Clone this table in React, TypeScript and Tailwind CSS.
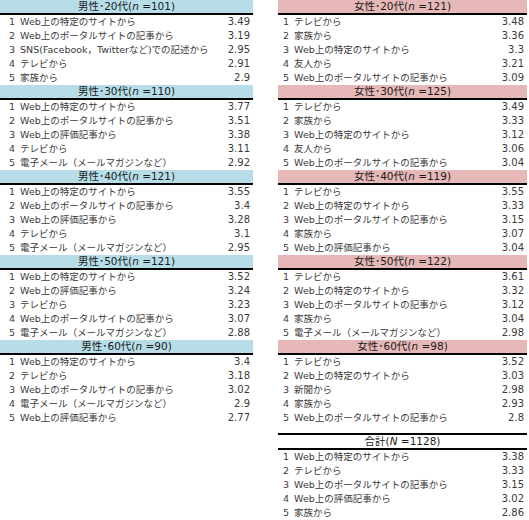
import React from 'react';

type Row = [string, string];
type Block = { title: string; n: string; big?: boolean; rows: Row[] };

const SITE = 'Web上の特定のサイトから';
const PORTAL = 'Web上のポータルサイトの記事から';
const REVIEW = 'Web上の評価記事から';
const TV = 'テレビから';
const FAMILY = '家族から';
const FRIEND = '友人から';
const MAIL = '電子メール（メールマガジンなど）';

const men: Block[] = [
  { title: '男性･20代', n: '101', rows: [[SITE, '3.49'], [PORTAL, '3.19'], ['SNS(Facebook，Twitterなど)での記述から', '2.95'], [TV, '2.91'], [FAMILY, '2.9']] },
  { title: '男性･30代', n: '110', rows: [[SITE, '3.77'], [PORTAL, '3.51'], [REVIEW, '3.38'], [TV, '3.11'], [MAIL, '2.92']] },
  { title: '男性･40代', n: '121', rows: [[SITE, '3.55'], [PORTAL, '3.4'], [REVIEW, '3.28'], [TV, '3.1'], [MAIL, '2.95']] },
  { title: '男性･50代', n: '121', rows: [[SITE, '3.52'], [REVIEW, '3.24'], [TV, '3.23'], [PORTAL, '3.07'], [MAIL, '2.88']] },
  { title: '男性･60代', n: '90', rows: [[SITE, '3.4'], [TV, '3.18'], [PORTAL, '3.02'], [MAIL, '2.9'], [REVIEW, '2.77']] },
];

const women: Block[] = [
  { title: '女性･20代', n: '121', rows: [[TV, '3.48'], [FAMILY, '3.36'], [SITE, '3.3'], [FRIEND, '3.21'], [PORTAL, '3.09']] },
  { title: '女性･30代', n: '125', rows: [[TV, '3.49'], [FAMILY, '3.33'], [SITE, '3.12'], [FRIEND, '3.06'], [PORTAL, '3.04']] },
  { title: '女性･40代', n: '119', rows: [[TV, '3.55'], [SITE, '3.33'], [PORTAL, '3.15'], [FAMILY, '3.07'], [REVIEW, '3.04']] },
  { title: '女性･50代', n: '122', rows: [[TV, '3.61'], [SITE, '3.32'], [PORTAL, '3.12'], [FAMILY, '3.04'], [MAIL, '2.98']] },
  { title: '女性･60代', n: '98', rows: [[TV, '3.52'], [SITE, '3.03'], ['新聞から', '2.98'], [FAMILY, '2.93'], [PORTAL, '2.8']] },
];

const total: Block = { title: '合計', n: '1128', big: true, rows: [[SITE, '3.38'], [TV, '3.33'], [PORTAL, '3.15'], [REVIEW, '3.02'], [FAMILY, '2.86']] };

function Table({ block, head, pad }: { block: Block; head: string; pad: string }) {
  return (
    <div>
      <div className={`h-[15px] border-b-2 border-black text-center text-[10.5px] leading-[13px] text-[#1a1a1a] ${head}`}>
        {block.title}(<i>{block.big ? 'N' : 'n'}</i> ={block.n})
      </div>
      {block.rows.map(([label, value], i) => (
        <div key={i} className={`flex h-[14px] items-center justify-between pr-[3px] text-[#3a3a3a] ${pad}`}>
          <span className="flex gap-[5px] text-[9.5px] leading-[14px]">
            <span>{i + 1}</span>
            <span>{label}</span>
          </span>
          <span className="text-[10px] leading-[14px]">{value}</span>
        </div>
      ))}
    </div>
  );
}

export default function App() {
  return (
    <div
      className="flex h-[520px] w-[529px] justify-between bg-white"
      style={{ fontFamily: '"DejaVu Sans", "Noto Sans CJK JP", sans-serif' }}
    >
      <div className="flex w-[253px] flex-col">
        {men.map((b) => (
          <Table key={b.title} block={b} head="bg-[#b7dee8]" pad="pl-[9px]" />
        ))}
      </div>
      <div className="mr-[2px] flex w-[249px] flex-col">
        {women.map((b) => (
          <Table key={b.title} block={b} head="bg-[#e6b8b7]" pad="pl-[5px]" />
        ))}
        <div className="mt-[8px] border-t-2 border-black">
          <Table block={total} head="bg-white" pad="pl-[5px]" />
        </div>
      </div>
    </div>
  );
}
